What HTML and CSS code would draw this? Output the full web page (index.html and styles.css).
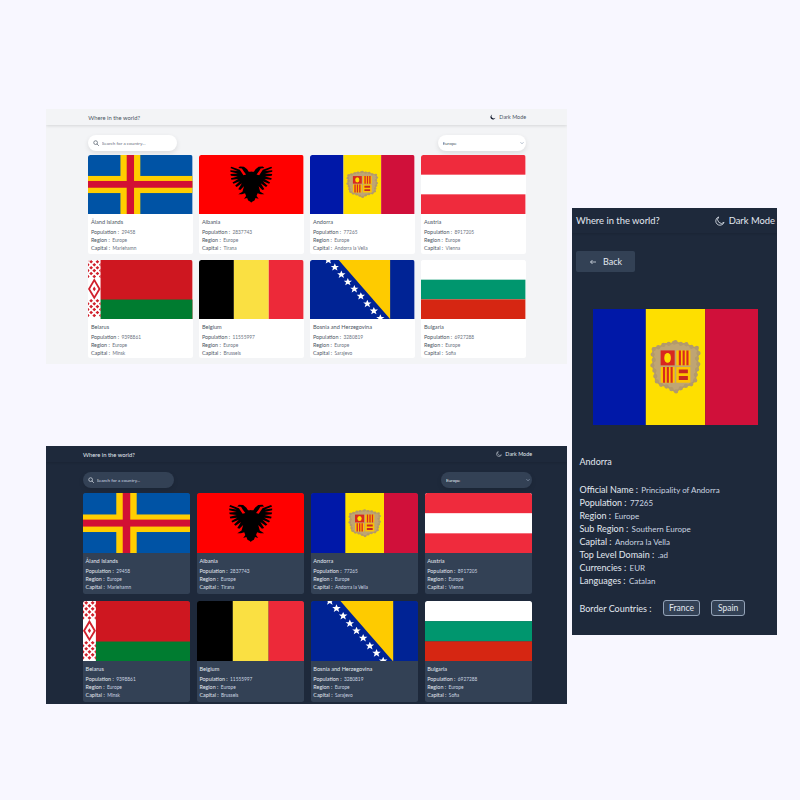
FILE: index.html
```html
<!DOCTYPE html>
<html lang="en">
<head>
  <meta charset="UTF-8" />
  <meta name="viewport" content="width=device-width, initial-scale=1.0" />
  <title>Where in the world?</title>
  <link rel="stylesheet" href="styles.css">
</head>
<body>

  <!-- flags and icons, reused by all three screens -->
  <svg class="sprite" xmlns="http://www.w3.org/2000/svg">
    <symbol id="flag-ax" viewBox="0 0 100 100" preserveAspectRatio="none">
      <rect width="100" height="100" fill="#0053a5"/>
      <rect x="31" width="19" height="100" fill="#ffce00"/>
      <rect y="35.5" width="100" height="29" fill="#ffce00"/>
      <rect x="37" width="7" height="100" fill="#d21034"/>
      <rect y="44" width="100" height="11.5" fill="#d21034"/>
    </symbol>
    <symbol id="flag-al" viewBox="0 0 100 70" preserveAspectRatio="none">
      <rect width="100" height="70" fill="#ff0000"/>
      <g id="eagle-half">
        <path fill="#000" d="M50.5 20 L47.5 20 L46 17 L43 14 L39 13.5 L37.5 15.5 L41 16 L42.5 19 L45 23 L42.5 24 L39 17.5 L31 14 L30 15.5 L37 19 L30 18 L30 20 L37 22 L30 22.5 L30.500 24.500 L37 25.5 L30.500 27.500 L31 29.500 L37.5 28.5 L32 32.500 L33 34 L39 31 L34.500 36.500 L36 38 L41 33.500 L37.500 40.500 L39.500 41.500 L43 37 L41.500 43.500 L37.5 46.5 L41 46.5 L44 45.5 L45 48.5 L43 52 L46 51 L47 54 L50.5 56.5 Z"/>
      </g>
      <use href="#eagle-half" transform="matrix(-1 0 0 1 100 0)"/>
    </symbol>
    <symbol id="flag-ad" viewBox="0 0 100 70" preserveAspectRatio="none">
      <rect width="32" height="70" fill="#0018a8"/>
      <rect x="32" width="36" height="70" fill="#fedf00"/>
      <rect x="68" width="32" height="70" fill="#d0103a"/>
      <path fill="#bfa573" stroke="#b39a6b" stroke-width="1" stroke-linejoin="round" d="M50 20 L53 21 L56 21 L60 23 L63 23.5 L64 27 L63 30 L64 34 L62.5 38 L62 43 L59.5 45.5 L56 46.5 L53 48 L50 50 L47 48 L44 46.5 L40.5 45.5 L38 43 L37.5 38 L36 34 L37 30 L36 27 L37 23.5 L40 23 L44 21 L47 21 Z"/>
      <path fill="none" stroke="#b39a6b" stroke-width="2.6" stroke-linecap="round" stroke-dasharray="0 3.4" d="M50 20 L53 21 L56 21 L60 23 L63 23.5 L64 27 L63 30 L64 34 L62.5 38 L62 43 L59.5 45.5 L56 46.5 L53 48 L50 50 L47 48 L44 46.5 L40.5 45.5 L38 43 L37.5 38 L36 34 L37 30 L36 27 L37 23.5 L40 23 L44 21 L47 21 Z"/>
      <rect x="41" y="25" width="8.5" height="9" fill="#d8281f"/>
      <ellipse cx="45.2" cy="29.5" rx="2" ry="3" fill="#fedf00"/>
      <rect x="50.5" y="25" width="8.5" height="9" fill="#fdc400"/>
      <path fill="#d8281f" d="M52 25h1.3v9H52zM54.3 25h1.3v9h-1.3zM56.6 25h1.3v9h-1.3z"/>
      <rect x="41" y="35" width="8.5" height="9.5" fill="#fdc400"/>
      <path fill="#d8281f" d="M42.4 35h1.3v9.5h-1.3zM44.7 35h1.3v9.5h-1.3zM47 35h1.3v9.5H47z"/>
      <rect x="50.5" y="35" width="8.5" height="9.5" fill="#fdc400"/>
      <path fill="#c8281f" d="M52 36.5h5.5v2.3H52zM52 40.5h5.5v2.3H52z"/>
    </symbol>
    <symbol id="flag-at" viewBox="0 0 3 3" preserveAspectRatio="none">
      <rect width="3" height="3" fill="#fff"/>
      <rect width="3" height="1" fill="#ef2b3d"/>
      <rect y="2" width="3" height="1" fill="#ef2b3d"/>
    </symbol>
    <symbol id="flag-by" viewBox="0 0 100 100" preserveAspectRatio="none">
      <rect width="100" height="100" fill="#ce1720"/>
      <rect y="67" width="100" height="33" fill="#007c30"/>
      <rect width="12" height="100" fill="#fff"/>
      <g fill="#d0202c">
        <path id="by-row-a" d="M3 0 l1.800 3 -1.800 3 -1.800 -3z M9 0 l1.800 3 -1.800 3 -1.800 -3z"/>
        <path id="by-row-b" d="M0 5 l1.500 3 -1.500 3z M6 5 l1.800 3 -1.800 3 -1.800 -3z M12 5 l-1.500 3 1.500 3z"/>
        <use href="#by-row-a" y="10"/><use href="#by-row-b" y="10"/>
        <use href="#by-row-a" y="20"/><use href="#by-row-b" y="20"/>
        <use href="#by-row-a" y="66"/><use href="#by-row-b" y="66"/>
        <use href="#by-row-a" y="76"/><use href="#by-row-b" y="76"/>
        <use href="#by-row-a" y="86"/><use href="#by-row-b" y="86"/>
        <path d="M6 31 l6 18 -6 18 -6 -18z"/>
      </g>
      <path fill="#fff" d="M6 37 l4 12 -4 12 -4 -12z"/>
      <path fill="#d0202c" d="M6 45 l1.500 4 -1.500 4 -1.500 -4z"/>
    </symbol>
    <symbol id="flag-be" viewBox="0 0 3 1" preserveAspectRatio="none">
      <rect width="1" height="1" fill="#000"/>
      <rect x="1" width="1" height="1" fill="#fae042"/>
      <rect x="2" width="1" height="1" fill="#ed2939"/>
    </symbol>
    <symbol id="flag-ba" viewBox="0 0 177 100" preserveAspectRatio="none">
      <rect width="177" height="100" fill="#002395"/>
      <path fill="#fecb00" d="M48.5 0 H135.5 V100 Z"/>
      <g fill="#fff">
        <path id="ba-star" d="M31 -6.500 L33 -2 L38 -2 L34 1.200 L35.500 6 L31 3.200 L26.500 6 L28 1.200 L24 -2 L29 -2 Z"/>
        <use href="#ba-star" x="11" y="12"/>
        <use href="#ba-star" x="22" y="24.5"/>
        <use href="#ba-star" x="33" y="37"/>
        <use href="#ba-star" x="44" y="49"/>
        <use href="#ba-star" x="55" y="61"/>
        <use href="#ba-star" x="66" y="74"/>
        <use href="#ba-star" x="77" y="86"/>
        <use href="#ba-star" x="88" y="98.5"/>
      </g>
    </symbol>
    <symbol id="flag-bg" viewBox="0 0 1 3" preserveAspectRatio="none">
      <rect width="1" height="1" fill="#fff"/>
      <rect y="1" width="1" height="1" fill="#00966e"/>
      <rect y="2" width="1" height="1" fill="#d62612"/>
    </symbol>
    <symbol id="icon-search" viewBox="0 0 16 16">
      <circle cx="7" cy="7" r="5" fill="none" stroke="currentColor" stroke-width="1.8"/>
      <path d="M11 11 L15 15" stroke="currentColor" stroke-width="1.8" stroke-linecap="round"/>
    </symbol>
    <symbol id="icon-moon" viewBox="0 0 16 16">
      <path fill="currentColor" d="M6 1.500 A6.800 6.800 0 1 0 14.500 10 A6 6 0 0 1 6 1.500 Z"/>
    </symbol>
    <symbol id="icon-moon-line" viewBox="0 0 16 16">
      <path fill="none" stroke="currentColor" stroke-width="1.3" stroke-linejoin="round" d="M6 1.500 A6.800 6.800 0 1 0 14.500 10 A6 6 0 0 1 6 1.500 Z"/>
    </symbol>
    <symbol id="icon-back" viewBox="0 0 16 16">
      <path fill="none" stroke="currentColor" stroke-width="1.5" d="M14 8 H3 M7 4 L3 8 L7 12"/>
    </symbol>
  </svg>

  <!-- light list -->
  <section class="window window-list theme-light light-list">
    <header class="topbar">
      <span class="brand">Where in the world?</span>
      <span class="mode"><svg class="mode-icon"><use href="#icon-moon"/></svg>Dark Mode</span>
    </header>
    <div class="toolbar">
      <label class="search">
        <svg class="search-icon"><use href="#icon-search"/></svg>
        <input type="text" placeholder="Search for a country..." />
      </label>
      <select class="region-select"><option>Europe</option></select>
    </div>
    <div class="grid">
      <article class="card">
        <svg class="card-flag"><use href="#flag-ax"/></svg>
        <div class="card-body">
          <h3>Åland Islands</h3>
          <p>Population : <span>29458</span></p>
          <p>Region : <span>Europe</span></p>
          <p>Capital : <span>Mariehamn</span></p>
        </div>
      </article>
      <article class="card">
        <svg class="card-flag"><use href="#flag-al"/></svg>
        <div class="card-body">
          <h3>Albania</h3>
          <p>Population : <span>2837743</span></p>
          <p>Region : <span>Europe</span></p>
          <p>Capital : <span>Tirana</span></p>
        </div>
      </article>
      <article class="card">
        <svg class="card-flag"><use href="#flag-ad"/></svg>
        <div class="card-body">
          <h3>Andorra</h3>
          <p>Population : <span>77265</span></p>
          <p>Region : <span>Europe</span></p>
          <p>Capital : <span>Andorra la Vella</span></p>
        </div>
      </article>
      <article class="card">
        <svg class="card-flag"><use href="#flag-at"/></svg>
        <div class="card-body">
          <h3>Austria</h3>
          <p>Population : <span>8917205</span></p>
          <p>Region : <span>Europe</span></p>
          <p>Capital : <span>Vienna</span></p>
        </div>
      </article>
      <article class="card">
        <svg class="card-flag"><use href="#flag-by"/></svg>
        <div class="card-body">
          <h3>Belarus</h3>
          <p>Population : <span>9398861</span></p>
          <p>Region : <span>Europe</span></p>
          <p>Capital : <span>Minsk</span></p>
        </div>
      </article>
      <article class="card">
        <svg class="card-flag"><use href="#flag-be"/></svg>
        <div class="card-body">
          <h3>Belgium</h3>
          <p>Population : <span>11555997</span></p>
          <p>Region : <span>Europe</span></p>
          <p>Capital : <span>Brussels</span></p>
        </div>
      </article>
      <article class="card">
        <svg class="card-flag"><use href="#flag-ba"/></svg>
        <div class="card-body">
          <h3>Bosnia and Herzegovina</h3>
          <p>Population : <span>3280819</span></p>
          <p>Region : <span>Europe</span></p>
          <p>Capital : <span>Sarajevo</span></p>
        </div>
      </article>
      <article class="card">
        <svg class="card-flag"><use href="#flag-bg"/></svg>
        <div class="card-body">
          <h3>Bulgaria</h3>
          <p>Population : <span>6927288</span></p>
          <p>Region : <span>Europe</span></p>
          <p>Capital : <span>Sofia</span></p>
        </div>
      </article>
    </div>
  </section>

  <!-- dark list -->
  <section class="window window-list theme-dark dark-list">
    <header class="topbar">
      <span class="brand">Where in the world?</span>
      <span class="mode"><svg class="mode-icon"><use href="#icon-moon-line"/></svg>Dark Mode</span>
    </header>
    <div class="toolbar">
      <label class="search">
        <svg class="search-icon"><use href="#icon-search"/></svg>
        <input type="text" placeholder="Search for a country..." />
      </label>
      <select class="region-select"><option>Europe</option></select>
    </div>
    <div class="grid">
      <article class="card">
        <svg class="card-flag"><use href="#flag-ax"/></svg>
        <div class="card-body">
          <h3>Åland Islands</h3>
          <p>Population : <span>29458</span></p>
          <p>Region : <span>Europe</span></p>
          <p>Capital : <span>Mariehamn</span></p>
        </div>
      </article>
      <article class="card">
        <svg class="card-flag"><use href="#flag-al"/></svg>
        <div class="card-body">
          <h3>Albania</h3>
          <p>Population : <span>2837743</span></p>
          <p>Region : <span>Europe</span></p>
          <p>Capital : <span>Tirana</span></p>
        </div>
      </article>
      <article class="card">
        <svg class="card-flag"><use href="#flag-ad"/></svg>
        <div class="card-body">
          <h3>Andorra</h3>
          <p>Population : <span>77265</span></p>
          <p>Region : <span>Europe</span></p>
          <p>Capital : <span>Andorra la Vella</span></p>
        </div>
      </article>
      <article class="card">
        <svg class="card-flag"><use href="#flag-at"/></svg>
        <div class="card-body">
          <h3>Austria</h3>
          <p>Population : <span>8917205</span></p>
          <p>Region : <span>Europe</span></p>
          <p>Capital : <span>Vienna</span></p>
        </div>
      </article>
      <article class="card">
        <svg class="card-flag"><use href="#flag-by"/></svg>
        <div class="card-body">
          <h3>Belarus</h3>
          <p>Population : <span>9398861</span></p>
          <p>Region : <span>Europe</span></p>
          <p>Capital : <span>Minsk</span></p>
        </div>
      </article>
      <article class="card">
        <svg class="card-flag"><use href="#flag-be"/></svg>
        <div class="card-body">
          <h3>Belgium</h3>
          <p>Population : <span>11555997</span></p>
          <p>Region : <span>Europe</span></p>
          <p>Capital : <span>Brussels</span></p>
        </div>
      </article>
      <article class="card">
        <svg class="card-flag"><use href="#flag-ba"/></svg>
        <div class="card-body">
          <h3>Bosnia and Herzegovina</h3>
          <p>Population : <span>3280819</span></p>
          <p>Region : <span>Europe</span></p>
          <p>Capital : <span>Sarajevo</span></p>
        </div>
      </article>
      <article class="card">
        <svg class="card-flag"><use href="#flag-bg"/></svg>
        <div class="card-body">
          <h3>Bulgaria</h3>
          <p>Population : <span>6927288</span></p>
          <p>Region : <span>Europe</span></p>
          <p>Capital : <span>Sofia</span></p>
        </div>
      </article>
    </div>
  </section>

  <!-- detail -->
  <section class="window theme-dark detail">
    <header class="topbar">
      <span class="brand">Where in the world?</span>
      <span class="mode"><svg class="mode-icon"><use href="#icon-moon-line"/></svg>Dark Mode</span>
    </header>
    <button class="back" type="button"><svg class="back-icon"><use href="#icon-back"/></svg>Back</button>
    <svg class="detail-flag"><use href="#flag-ad"/></svg>
    <h2 class="detail-name">Andorra</h2>
    <ul class="facts">
      <li>Official Name : <span>Principality of Andorra</span></li>
      <li>Population : <span>77265</span></li>
      <li>Region : <span>Europe</span></li>
      <li>Sub Region : <span>Southern Europe</span></li>
      <li>Capital : <span>Andorra la Vella</span></li>
      <li>Top Level Domain : <span>.ad</span></li>
      <li>Currencies : <span>EUR</span></li>
      <li>Languages : <span>Catalan</span></li>
    </ul>
    <div class="borders">
      <span class="borders-label">Border Countries :</span>
      <button class="chip" type="button">France</button>
      <button class="chip" type="button">Spain</button>
    </div>
  </section>

</body>
</html>
```
FILE: styles.css
```css
* {
  box-sizing: border-box;
}
body {
  font-family: 'Lato', sans-serif;
  margin: 0;
  width: 800px;
  height: 800px;
  position: relative;
  overflow: hidden;
  background: #f8f7ff;
}
h2, h3, p, ul {
  margin: 0;
  padding: 0;
  font-weight: 400;
}
.sprite {
  display: none;
}

/* the three screens sit on a free canvas */
.window {
  position: absolute;
  overflow: hidden;
}
.theme-light {
  background: #f3f4f6;
  color: #4b5563;
  --card: #fff;
  --field: #fff;
  --muted: #6b7280;
}
.theme-dark {
  background: #1e293b;
  color: #e2e8f0;
  --card: #334155;
  --field: #334155;
  --muted: #cbd5e1;
}
.light-list {
  left: 46px;
  top: 109px;
  width: 521px;
  height: 255px;
  --pad-left: 42.3px;
  --pad-right: 41px;
  --card-h: 98.5px;
  --flag-h: 59px;
  --gap: 6.4px;
  --select-w: 88.5px;
  --search-w: 88.5px;
  --grid-top: 4px;
}
.dark-list {
  left: 46px;
  top: 446px;
  width: 521px;
  height: 258px;
  --pad-left: 37px;
  --pad-right: 35px;
  --card-h: 101.5px;
  --flag-h: 60.5px;
  --gap: 6.5px;
  --select-w: 91px;
  --search-w: 91px;
  --grid-top: 4.5px;
}
.detail {
  left: 572px;
  top: 208px;
  width: 205px;
  height: 427px;
}

/* top bar */
.topbar {
  display: flex;
  justify-content: space-between;
  align-items: center;
  height: 16px;
  padding: 0 var(--pad-right) 0 var(--pad-left);
}
.theme-light .topbar {
  box-shadow: 0 1px 3px rgba(0, 0, 0, 0.12);
}
.theme-dark .topbar {
  box-shadow: 0 1px 2px rgba(0, 0, 0, 0.12);
}
.brand {
  font-size: 5.8px;
}
.mode {
  display: flex;
  align-items: center;
  gap: 3px;
  font-size: 5.4px;
}
.mode-icon {
  width: 6px;
  height: 6px;
}
.theme-light .mode-icon {
  color: #0f172a;
}

/* search + filter */
.toolbar {
  display: flex;
  justify-content: space-between;
  align-items: center;
  height: 16px;
  margin-top: 10px;
  padding: 0 var(--pad-right) 0 var(--pad-left);
}
.search {
  display: flex;
  align-items: center;
  gap: 2.5px;
  width: var(--search-w);
  height: 100%;
  padding-left: 5px;
  border-radius: 8px;
  background: var(--field);
  box-shadow: 0 2px 5px rgba(0, 0, 0, 0.1);
}
.search-icon {
  width: 6px;
  height: 6px;
  flex: none;
}
.search input {
  width: 70px;
  padding: 0;
  border: none;
  outline: none;
  background: none;
  font-family: inherit;
  font-size: 4.6px;
  color: inherit;
}
.search input::placeholder {
  color: var(--muted);
  opacity: 1;
}
.region-select {
  appearance: none;
  width: var(--select-w);
  height: 100%;
  padding: 0 0 0 5px;
  border: none;
  border-radius: 8px;
  background: var(--field) url("data:image/svg+xml,%3Csvg xmlns='http://www.w3.org/2000/svg' viewBox='0 0 8 8'%3E%3Cpath d='M1 2.500 L4 5.500 L7 2.500' fill='none' stroke='%2394a3b8' stroke-width='1.500'/%3E%3C/svg%3E") no-repeat right 2px center / 4px 4px;
  box-shadow: 0 2px 5px rgba(0, 0, 0, 0.1);
  font-family: inherit;
  font-size: 4.6px;
  color: inherit;
}

/* cards */
.grid {
  display: grid;
  grid-template-columns: repeat(4, 1fr);
  grid-auto-rows: var(--card-h);
  gap: var(--gap);
  margin-top: var(--grid-top);
  padding: 0 var(--pad-right) 0 var(--pad-left);
}
.card {
  display: flex;
  flex-direction: column;
  overflow: hidden;
  border-radius: 2.5px;
  background: var(--card);
}
.card-flag {
  display: block;
  width: 100%;
  height: var(--flag-h);
  flex: none;
}
.card-body {
  padding: 4px 2.6px 0;
  font-size: 5.4px;
  line-height: 8px;
}
.card-body h3 {
  height: 8px;
  margin-bottom: 2.2px;
  font-size: 5.6px;
}
.card-body p {
  height: 8px;
}
.card-body span {
  margin-left: 1px;
  font-size: 4.8px;
  color: var(--muted);
}

/* detail screen */
.detail .topbar {
  height: 25px;
  padding: 0 2px 0 4px;
}
.detail .brand {
  font-size: 9.4px;
}
.detail .mode {
  gap: 4px;
  font-size: 9.4px;
}
.detail .mode-icon {
  width: 10px;
  height: 10px;
}
.back {
  display: flex;
  align-items: center;
  justify-content: center;
  gap: 6px;
  width: 59px;
  height: 21px;
  margin: 18px 0 0 4px;
  border: none;
  border-radius: 2px;
  background: #334155;
  color: #e2e8f0;
  font-family: inherit;
  font-size: 9px;
}
.back-icon {
  width: 8px;
  height: 8px;
}
.detail-flag {
  display: block;
  width: 165px;
  height: 116px;
  margin: 37px 0 0 20.5px;
}
.detail-name {
  margin: 29.5px 0 0 7.5px;
  font-size: 9px;
  line-height: 13px;
}
.facts {
  margin: 15.5px 0 0 7.5px;
  list-style: none;
  font-size: 9px;
  line-height: 13px;
}
.facts li {
  height: 13px;
}
.facts span {
  margin-left: 1px;
  font-size: 8px;
  color: #cbd5e1;
}
.borders {
  display: flex;
  align-items: center;
  gap: 11px;
  margin: 13px 0 0 7.5px;
  font-size: 9px;
}
.chip {
  height: 16px;
  padding: 0 5.5px;
  border: 1px solid #94a3b8;
  border-radius: 3px;
  background: #334155;
  color: #e2e8f0;
  font-family: inherit;
  font-size: 8.5px;
}
```
